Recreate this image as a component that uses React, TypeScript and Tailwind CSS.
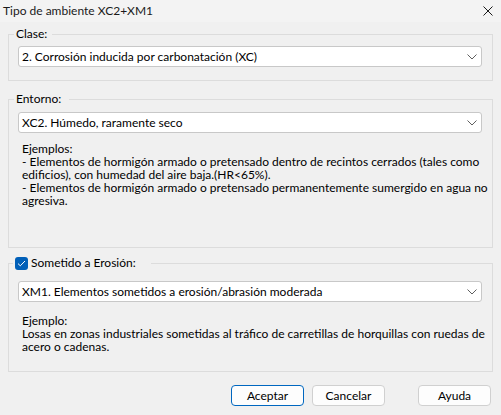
import React from "react";

function Chevron() {
  return (
    <svg width="10" height="6" viewBox="0 0 10 6" className="shrink-0">
      <path d="M0.5 0.5 L5 5 L9.5 0.5" fill="none" stroke="#5f5f5f" strokeWidth="1" />
    </svg>
  );
}

function Combo({ text }: { text: string }) {
  return (
    <div className="ml-[9px] mr-[10px] h-[21px] flex items-center justify-between bg-white border border-[#c8c8c8] rounded-[3px] pl-[3px] pr-[4px]">
      <span className="whitespace-nowrap leading-[13px]">{text}</span>
      <Chevron />
    </div>
  );
}

function Button({ label, primary }: { label: string; primary?: boolean }) {
  return (
    <button
      className={
        primary
          ? "w-[73px] h-[21px] rounded-[4px] bg-[#fdfdfd] border border-[#0067c0] text-[12px] leading-[13px] text-black"
          : "w-[73px] h-[21px] rounded-[4px] bg-[#fdfdfd] border border-[#d0d0d0] text-[12px] leading-[13px] text-black"
      }
    >
      {label}
    </button>
  );
}

export default function App() {
  return (
    <div
      className="w-[501px] h-[415px] bg-[#f0f0f0] text-[12px] text-black overflow-hidden"
      style={{ fontFamily: 'Lato, "Noto Sans", sans-serif' }}
    >
      <div className="h-[22px] bg-[#f3f3f3] flex items-center justify-between pl-[3px] pr-[8px]">
        <span className="text-[12px] leading-[16px] text-[#1a1a1a] whitespace-nowrap">Tipo de ambiente XC2+XM1</span>
        <svg width="10" height="10" viewBox="0 0 10 10">
          <path d="M0.5 0.5 L9.5 9.5 M9.5 0.5 L0.5 9.5" stroke="#1a1a1a" strokeWidth="1" />
        </svg>
      </div>

      <div className="px-[8px] pt-[4px] flex flex-col">
        <fieldset className="border border-[#dcdcdc] pb-[13px]">
          <legend className="ml-[5px] pl-[2px] pr-[5px] leading-[16px]">Clase:</legend>
          <div className="mt-[4px]">
            <Combo text="2. Corrosión inducida por carbonatación (XC)" />
          </div>
        </fieldset>

        <fieldset className="mt-[10px] border border-[#dcdcdc] h-[157px]">
          <legend className="ml-[5px] pl-[2px] pr-[8px] leading-[16px]">Entorno:</legend>
          <div className="mt-[5px]">
            <Combo text="XC2. Húmedo, raramente seco" />
          </div>
          <div className="mt-[9px] pl-[13px] leading-[13px] whitespace-nowrap">
            <div>Ejemplos:</div>
            <div>- Elementos de hormigón armado o pretensado dentro de recintos cerrados (tales como</div>
            <div>edificios), con humedad del aire baja.(HR&lt;65%).</div>
            <div>- Elementos de hormigón armado o pretensado permanentemente sumergido en agua no</div>
            <div>agresiva.</div>
          </div>
        </fieldset>

        <fieldset className="mt-[7px] border border-[#dcdcdc] h-[117px]">
          <legend className="ml-[4px] pl-[2px] pr-[15px]">
            <span className="flex items-center h-[16px] leading-[16px]">
              <span className="w-[13px] h-[13px] rounded-[3px] bg-[#005fb8] flex items-center justify-center mr-[3px]">
                <svg width="9" height="7" viewBox="0 0 9 7">
                  <path d="M1 3.6 L3.3 5.8 L8 1" fill="none" stroke="#ffffff" strokeWidth="1" />
                </svg>
              </span>
              <span>Sometido a Erosión:</span>
            </span>
          </legend>
          <div className="mt-[10px]">
            <Combo text="XM1. Elementos sometidos a erosión/abrasión moderada" />
          </div>
          <div className="mt-[12px] pl-[13px] leading-[13px] whitespace-nowrap">
            <div>Ejemplo:</div>
            <div>Losas en zonas industriales sometidas al tráfico de carretillas de horquillas con ruedas de</div>
            <div>acero o cadenas.</div>
          </div>
        </fieldset>

        <div className="mt-[13px] flex items-center pl-[223px]">
          <Button label="Aceptar" primary />
          <div className="ml-[8px]">
            <Button label="Cancelar" />
          </div>
          <div className="ml-[33px]">
            <Button label="Ayuda" />
          </div>
        </div>
      </div>
    </div>
  );
}
